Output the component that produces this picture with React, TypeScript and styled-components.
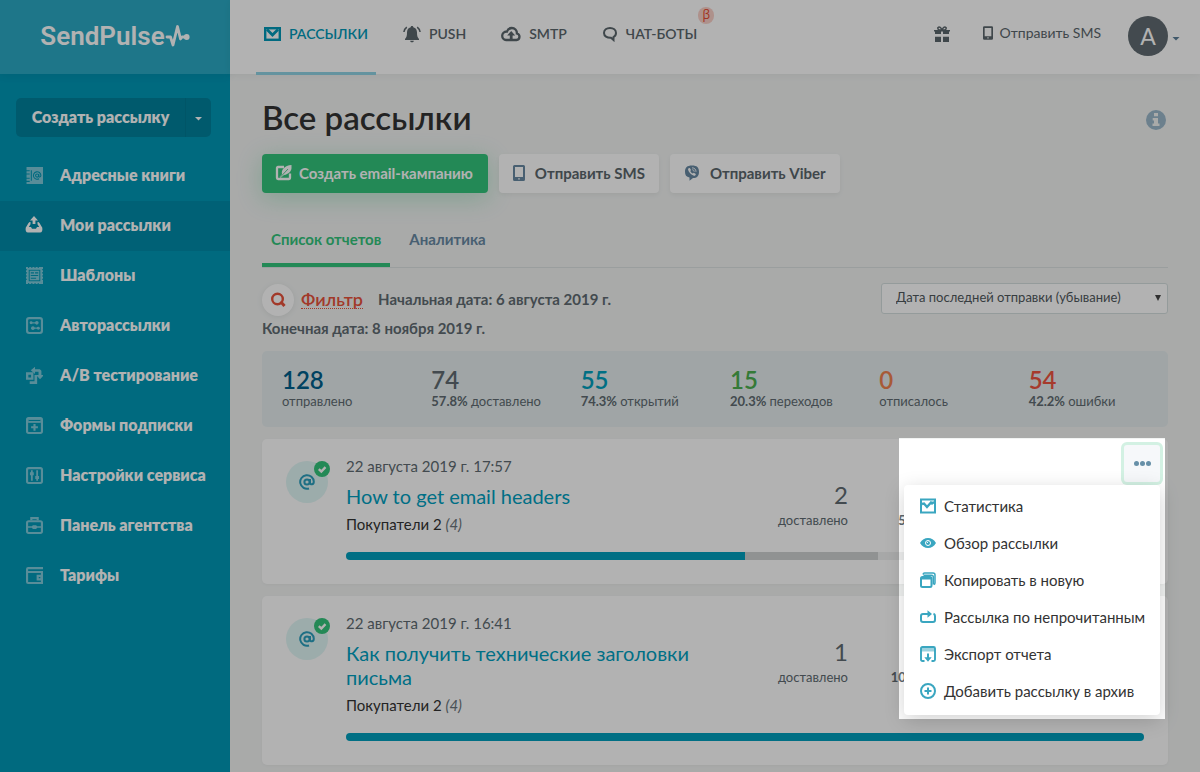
import React from "react";
import styled, { createGlobalStyle, css } from "styled-components";

const Global = createGlobalStyle`
  * { box-sizing: border-box; }
  body {
    margin: 0;
    background: #f2f4f3;
    color: #606b71;
    font-family: Lato, "Open Sans", "Noto Sans", sans-serif;
    font-size: 15px;
    line-height: 20px;
  }
  button, select { font: inherit; }
  button { border: 0; cursor: pointer; }
  a { text-decoration: none; color: inherit; }
  svg { display: block; flex: none; }
`;

/* ---------- icons ---------- */

type IconProps = { w?: number; h?: number; vb?: string; children?: React.ReactNode };
const Icon = ({ w = 17, h = 17, vb = "1 1 16 16", children }: IconProps) => (
  <svg width={w} height={h} viewBox={vb} fill="currentColor" aria-hidden="true">
    {children}
  </svg>
);
const line = { fill: "none", stroke: "currentColor", strokeWidth: 2 } as const;

const PulseIcon = () => (
  <svg width="25" height="24" viewBox="0 0 25 24" fill="none" stroke="currentColor" strokeWidth="2.8" strokeLinejoin="round" strokeLinecap="round" aria-hidden="true">
    <path d="M2 13H5.500l2.500 8L12.500 2.500l3 12.500 1.500-2H21" />
    <circle cx="21.700" cy="13" r="2.900" fill="currentColor" stroke="none" />
  </svg>
);
const BookIcon = () => (
  <Icon>
    <path fillRule="evenodd" d="M1.500 1H17v16H1.500v-2h3v-1h-3v-2h3v-1h-3V8h3V7h-3V5h3V4h-3zM5.500 4v10h1V4z" />
    <g fill="none" stroke="#0098b7" strokeWidth="1">
      <circle cx="11.500" cy="9" r="1.500" />
      <path d="M13 7.500v2.200c0 1.300 2 1 2-.9a3.500 3.500 0 1 0-1.700 3.200" />
    </g>
  </Icon>
);
const OutboxIcon = () => (
  <Icon w={18} h={18} vb="0 0 18 18">
    <path d="M9 0l4 4.500h-2.600V8H7.600V4.500H5z" />
    <path fillRule="evenodd" d="M5.500 6v2.200L3.800 11H6l1 1.800h4L12 11h2.200l-1.700-2.800V6c1 0 1.600.4 2 1.100l2.800 4.700c.4 3.200-.3 4.700-2.300 4.700H3c-2 0-2.700-1.500-2.300-4.700l2.800-4.700c.4-.7 1-1.100 2-1.100z" />
  </Icon>
);
const TemplateIcon = () => (
  <Icon>
    <path d="M1 2h16M1 16h16M2 1v16M16 1v16" {...line} strokeDasharray="2 1" />
    <path fillRule="evenodd" d="M2 2h14v14H2zM3.500 3.500v11h11v-11z" />
    <path d="M4.500 4.500h9v9h-9z" />
    <path d="M5.500 6.500h3M5.500 9h7M5.500 11.500h5M9.500 6.500h3" stroke="#0098b7" strokeWidth="1" />
  </Icon>
);
const AutoIcon = () => (
  <Icon>
    <rect x="2" y="2" width="14" height="14" rx="2" {...line} />
    <path d="M5 6.500h7M6 11.500h7" stroke="currentColor" strokeWidth="1.200" />
    <circle cx="5.800" cy="6.500" r="1.400" /><circle cx="11.200" cy="6.500" r="1.700" />
    <circle cx="7.500" cy="11.500" r="1.700" /><circle cx="12.600" cy="11.500" r="1.400" />
  </Icon>
);
const AbIcon = () => (
  <Icon>
    <path fillRule="evenodd" d="M1 6h7v7H1zM3.200 8.200v2.600h2.600V8.200z" />
    <path d="M9 8.500h2.500V17H4.500v-2.500H9z" />
    <path d="M5.500 4L9.500.8V3h4.500l1.500 1.500v4H18L14.200 12.500 10.500 8.500h2.300V5.500H9.500v2z" />
  </Icon>
);
const FormIcon = () => (
  <Icon>
    <rect x="2" y="2" width="14" height="14" rx="1.500" {...line} />
    <path d="M3 3h12v3.500H3z" /><path d="M3.500 4.300h11" stroke="#0098b7" strokeWidth="1" />
    <path d="M9 7.500v6.500M5.800 10.700h6.400" {...line} />
  </Icon>
);
const SlidersIcon = () => (
  <Icon>
    <rect x="2" y="2" width="14" height="14" rx="1.500" {...line} />
    <path d="M6.500 4v10M11.500 4v10" stroke="currentColor" strokeWidth="1.700" />
    <path d="M4.700 6h3.600v2.800H4.700zM9.700 9.500h3.600v2.800H9.700z" />
  </Icon>
);
const CaseIcon = () => (
  <Icon>
    <rect x="2" y="5" width="14" height="11" rx="1.500" {...line} />
    <path d="M6 4V2h6v2" {...line} />
    <path d="M2 9.800h4.500l1-1h3l1 1H16v1.400h-4.500l-1 1.200h-3l-1-1.200H2z" />
  </Icon>
);
const WalletIcon = () => (
  <Icon>
    <path d="M17 2H3q-1 0-1 1v12q0 1 1 1h13v-3M2.500 5.700H16V9" {...line} />
    <path fillRule="evenodd" d="M11 8.300h6v5.400h-6zM13 10.300v1.400h1.500v-1.400z" />
  </Icon>
);
const MailIcon = () => (
  <Icon w={17} h={16} vb="0 0 17 16">
    <rect x="1.200" y="2.200" width="14.600" height="11.600" {...line} strokeWidth="2.400" />
    <path d="M3 3.500l5.500 5.500 5.500-5.500" fill="none" stroke="currentColor" strokeWidth="2.800" />
  </Icon>
);
const BellIcon = () => (
  <Icon w={18} h={18} vb="0 0 18 18">
    <path d="M9 1c.8 0 1.300.5 1.300 1.200C12.800 2.800 14 4.700 14 7.500c0 3.500.5 4.800 2 6.500v1H2v-1c1.500-1.700 2-3 2-6.500 0-2.800 1.200-4.700 3.700-5.300C7.700 1.500 8.200 1 9 1zM7.200 15.700h3.600c0 2.100-3.600 2.100-3.600 0z" />
    <path d="M3.800 2.200Q1.300 4 .9 7M14.200 2.200Q16.700 4 17.100 7" fill="none" stroke="currentColor" strokeWidth="1.500" />
  </Icon>
);
const CloudIcon = () => (
  <Icon w={20} h={16} vb="0 0 20 16">
    <path d="M5 14h10.500a3.300 3.300 0 0 0 .4-6.500C16 4.300 13.700 2 10.800 2 8.300 2 6.700 3.300 6 5.500 3 5.300 1.200 7.500 1.200 9.800 1.200 12.200 3 14 5 14z" {...line} strokeWidth="2.300" />
    <path d="M10.200 5l4 4.500h-2.600V14H8.800V9.500H6.200z" />
  </Icon>
);
const ChatIcon = () => (
  <Icon w={16} h={16} vb="0 0 16 16">
    <path d="M8 2c3.400 0 6 2 6 4.900 0 1.800-.9 3.200-2.500 4.100V14L9 11.800c-4 .2-7-1.800-7-4.900C2 4 4.600 2 8 2z" {...line} />
  </Icon>
);
const GiftIcon = () => (
  <Icon w={16} h={16} vb="0 0 16 16">
    <path d="M1 4h6v4H1zM9 4h6v4H9zM1 10.700h6V16H1zM9 10.700h6V16H9z" />
    <path d="M0 4.800h16M7.500 4C4.500 4.500 3.500 3 4 1.500c1.500-1 3 0 4 2.500 1-2.500 2.500-3.500 4-2.500.5 1.500-.5 3-3.500 2.500" fill="none" stroke="currentColor" strokeWidth="1.500" />
  </Icon>
);
const PhoneIcon = ({ w = 12, h = 16 }: { w?: number; h?: number }) => (
  <Icon w={w} h={h} vb="0 0 12 16">
    <path fillRule="evenodd" d="M1.500 0h9A1.500 1.500 0 0 1 12 1.500v13a1.500 1.500 0 0 1-1.500 1.500h-9A1.500 1.500 0 0 1 0 14.500v-13A1.500 1.500 0 0 1 1.500 0zM2 2v10h8V2zm3.200 11.200v1.300h1.600v-1.300z" />
  </Icon>
);
const ComposeIcon = () => (
  <Icon w={17} h={16} vb="0 0 17 16">
    <path d="M9 2H3Q2 2 2 3v10q0 1 1 1h11q1 0 1-1V8.500" {...line} strokeWidth="2.300" />
    <path d="M16.500 0v3c0 3-3 6.500-7.500 7L5.500 13l-1-1L7 9.200C6 5 9.500.5 16.500 0z" />
    <path d="M5 12.500L13 4" stroke="#33c47b" strokeWidth=".8" />
  </Icon>
);
const ViberIcon = () => (
  <Icon w={16} h={16} vb="0 0 16 16">
    <path d="M8 .5c5 0 7 2 7 6.300s-2 6.200-6 6.300L5.500 15.800v-3.200C2.300 11.900 1 10.200 1 6.800 1 2.500 3 .5 8 .5z" />
    <path d="M4.500 3.300l1.300-.2 1.200 2-.7 1c.5 1.300 1.200 2 2.500 2.500l1-.8 2 1.200c0 1.300-.8 2-1.800 1.800C7 9.600 4.700 7.500 4 4.500z" fill="#fff" />
    <path d="M8 2.800c2.700.2 3.900 1.500 4 4M8.300 4.700c1.200.1 1.800.8 1.900 2" fill="none" stroke="#fff" strokeWidth=".9" />
  </Icon>
);
const InfoIcon = () => (
  <Icon w={20} h={20} vb="0 0 20 20">
    <circle cx="10" cy="10" r="10" />
    <path d="M8 3h4v3.200H8zM6.700 8H12v5.500h1.500V16h-7v-2.500H8v-3H6.700z" fill="#f2f4f3" />
  </Icon>
);
const SearchIcon = () => (
  <Icon w={16} h={16} vb="0 0 16 16">
    <circle cx="7.500" cy="7" r="5.300" fill="none" stroke="currentColor" strokeWidth="2.400" />
    <path d="M10.500 9.500l4 4.500" stroke="currentColor" strokeWidth="3" />
  </Icon>
);
const AtIcon = () => (
  <Icon w={16} h={16} vb="0 0 16 16">
    <g {...line}>
      <circle cx="8" cy="8" r="2.600" />
      <path d="M11 5v3.600c0 2.600 3.800 2.300 3.800-.8A6.800 6.800 0 1 0 10 14.500" />
    </g>
  </Icon>
);
const CheckIcon = () => (
  <Icon w={16} h={16} vb="0 0 16 16">
    <path d="M4.800 8.200l2.500 2.300L11.500 6.200" fill="none" stroke="currentColor" strokeWidth="2.400" />
  </Icon>
);
const StatIcon = () => (
  <Icon w={16} h={16} vb="0 0 16 16">
    <rect x="1" y="1.500" width="14" height="13" {...line} />
    <path d="M2 6l2-.5 3 3.500 4-4.500 1 1 2-1.500" fill="none" stroke="currentColor" strokeWidth="2.400" />
  </Icon>
);
const EyeIcon = () => (
  <Icon w={16} h={16} vb="0 0 16 16">
    <path d="M0 8c2-3.300 4.700-5 8-5s6 1.700 8 5c-2 3.300-4.700 5-8 5s-6-1.700-8-5z" />
    <circle cx="8" cy="8" r="2.500" fill="none" stroke="#fff" strokeWidth="1" />
    <path d="M7 8l1-1.200" stroke="#fff" />
  </Icon>
);
const CopyIcon = () => (
  <Icon w={16} h={16} vb="0 0 16 16">
    <rect x="1" y="5" width="10.500" height="10" rx="1.500" {...line} />
    <path d="M1 5h10.500v2.500H1z" />
    <path d="M3 2.500Q3.300 1 4.500 1H13q2 0 2 2v8q0 1.200-1.200 1.500M3.500 3.300H11.500q1.800 0 1.800 1.800V12.500" fill="none" stroke="currentColor" strokeWidth="1.500" />
  </Icon>
);
const ResendIcon = () => (
  <Icon w={16} h={16} vb="0 0 16 16">
    <path d="M9 5H3Q1 5 1 7v4Q1 13 3 13h10q2 0 2-2V7Q15 5.300 13.500 4.800" {...line} />
    <path d="M7.500 1.200L12 5 7.500 8.800z" />
  </Icon>
);
const ExportIcon = () => (
  <Icon w={16} h={16} vb="0 0 16 16">
    <path d="M4.500 15H2.500Q1 15 1 13.500v-11Q1 1 2.500 1h11Q15 1 15 2.500v11q0 1.500-1.500 1.500h-2" {...line} strokeWidth="1.900" />
    <path d="M1 2h14v3.500H1z" opacity=".5" />
    <path d="M7 7.500h2v3.700h2.700L8 15.800 4.300 11.200H7z" />
  </Icon>
);
const AddIcon = () => (
  <Icon w={16} h={16} vb="0 0 16 16">
    <circle cx="8" cy="8" r="7" {...line} />
    <path d="M8 4.500v7M4.500 8h7" {...line} />
  </Icon>
);

/* ---------- layout ---------- */

const Page = styled.div`
  display: flex;
  min-height: 100vh;
`;
const Sidebar = styled.aside`
  flex: none;
  width: 230px;
  background: #0098b7;
  color: #fff;
`;
const Logo = styled.a`
  display: flex;
  align-items: center;
  justify-content: center;
  height: 74px;
  padding-bottom: 3px;
  background: #2baac5;
  box-shadow: 0 2px 8px rgba(0, 60, 80, 0.1);
  font: 600 26px/30px Roboto, sans-serif;
`;
const CreateGroup = styled.div`
  display: flex;
  margin: 24px 19px 14px 16px;
  border-radius: 5px;
  overflow: hidden;
  background: #00829d;
`;
const CreateButton = styled.button`
  flex: 1;
  height: 39px;
  padding: 0 0 2px;
  background: none;
  color: #fff;
  font-size: 16px;
  font-weight: 800;
`;
const CreateToggle = styled.button`
  display: grid;
  place-items: center;
  width: 26px;
  padding: 2px 0 0;
  background: none;
  border-left: 1px solid #007a94;
  color: #fff;
`;
const Caret = styled.span`
  width: 8px;
  height: 4px;
  background: currentColor;
  clip-path: polygon(0 0, 100% 0, 50% 100%);
`;
const SideLink = styled.a<{ $active?: boolean }>`
  display: flex;
  align-items: center;
  height: 50px;
  padding: 0 0 2px 25px;
  font-size: 16px;
  font-weight: 800;
  background: ${(p) => (p.$active ? "#008ba9" : "transparent")};
`;
const SideIcon = styled.span<{ $active?: boolean }>`
  display: grid;
  place-items: center;
  width: 18px;
  margin-right: 17px;
  opacity: ${(p) => (p.$active ? 1 : 0.5)};
`;

const Column = styled.div`
  flex: 1;
  min-width: 0;
`;
const Header = styled.header`
  display: flex;
  justify-content: space-between;
  height: 74px;
  padding: 0 20px 0 26px;
  background: #fff;
  box-shadow: 0 1px 8px rgba(0, 0, 0, 0.06);
`;
const TopNav = styled.nav`
  display: flex;
  gap: 19px;
`;
const TopLink = styled.a<{ $active?: boolean }>`
  position: relative;
  display: flex;
  align-items: center;
  gap: 8px;
  height: 75px;
  padding: 0 8px 7px;
  font-size: 14px;
  font-weight: 600;
  color: #5b666c;
  ${(p) => p.$active && css`
    color: #0099b8;
    box-shadow: inset 0 -3px #90d3e4;
  `}
`;
const Beta = styled.sup`
  position: absolute;
  top: 7px;
  right: -9px;
  width: 16px;
  height: 17px;
  border-radius: 8px;
  background: #fad0c8;
  color: #e8452c;
  font: 12px/16px "Open Sans", sans-serif;
  text-align: center;
`;
const HeaderTools = styled.div`
  display: flex;
  align-items: center;
  color: #5b666c;
`;
const SmsLink = styled.a`
  display: flex;
  align-items: center;
  gap: 6px;
  margin: 0 27px 8px 33px;
  font-size: 14px;
`;
const GiftLink = styled.a`
  margin-bottom: 6px;
`;
const Profile = styled.button`
  display: flex;
  align-items: center;
  gap: 4px;
  padding: 0 0 2px;
  background: none;
  color: #5c7f99;
  ${Caret} { margin-top: 5px; }
`;
const Avatar = styled.span`
  width: 40px;
  height: 40px;
  border-radius: 50%;
  background: #606b71;
  color: #fff;
  font-size: 23px;
  line-height: 40px;
`;

const Main = styled.main`
  padding: 24px 32px 7px;
`;
const TitleRow = styled.div`
  display: flex;
  align-items: center;
  justify-content: space-between;
  height: 40px;
  padding: 4px 2px 0 0;
  color: #9bb8cb;
`;
const Title = styled.h1`
  margin: 0 0 6px;
  font-size: 33px;
  line-height: 40px;
  font-weight: 600;
  color: #333;
`;
const Actions = styled.div`
  display: flex;
  gap: 11px;
  margin-top: 16px;
`;
const Action = styled.button<{ $primary?: boolean }>`
  display: flex;
  align-items: center;
  gap: 10px;
  height: 39px;
  padding: 0 14px 2px;
  border-radius: 4px;
  font-weight: 700;
  background: #fff;
  color: #5b666c;
  box-shadow: 0 2px 5px rgba(0, 0, 0, 0.06);
  svg { color: #6789a3; }
  ${(p) => p.$primary && css`
    gap: 7px;
    padding: 0 15px 2px 13px;
    background: #33c47b;
    color: #fff;
    box-shadow: 0 5px 25px rgba(51, 196, 123, 0.3);
    svg { color: #fff; }
  `}
`;
const Tabs = styled.div`
  display: flex;
  height: 47px;
  margin-top: 28px;
  border-bottom: 1px solid #dde3e3;
`;
const Tab = styled.button<{ $active?: boolean }>`
  height: 46px;
  padding: 0 9px 10px;
  margin: 0 10px 0 0;
  background: none;
  font-weight: 700;
  color: #6789a3;
  ${(p) => p.$active && css`
    color: #33c47b;
    border-bottom: 4px solid #33c47b;
    padding-bottom: 6px;
  `}
`;
const FilterRow = styled.div`
  display: flex;
  justify-content: space-between;
  align-items: flex-start;
  margin-top: 15px;
`;
const FilterInfo = styled.div`
  width: 400px;
  font-weight: 700;
`;
const FilterLine = styled.div`
  display: flex;
  align-items: center;
  height: 33px;
`;
const FilterEnd = styled.div`
  line-height: 24px;
`;
const FilterButton = styled.button`
  display: flex;
  align-items: center;
  gap: 7px;
  margin-right: 15px;
  padding: 0;
  background: none;
  color: #e8523c;
  font-size: 18px;
  font-weight: 600;
`;
const Round = styled.span`
  display: grid;
  place-items: center;
  width: 32px;
  height: 32px;
  border-radius: 50%;
  background: #fff;
  box-shadow: 0 1px 6px rgba(0, 0, 0, 0.08);
`;
const Dotted = styled.span`
  line-height: 18px;
  border-bottom: 1px dotted;
`;
const StartDate = styled.span`
  padding-bottom: 2px;
`;
const SortBox = styled.div`
  position: relative;
  width: 287px;
  color: #444;
`;
const Sort = styled.select`
  width: 100%;
  height: 31px;
  padding: 0 28px 3px 14px;
  appearance: none;
  border: 1px solid #d5dfde;
  border-radius: 3px;
  background: #fff;
  color: #50585c;
  font-size: 13px;
`;
const SortArrow = styled.span`
  position: absolute;
  right: 7px;
  top: 12px;
  width: 6px;
  height: 6px;
  background: currentColor;
  clip-path: polygon(0 0, 100% 0, 50% 100%);
  pointer-events: none;
`;

const Summary = styled.section`
  display: flex;
  margin: 11px 0 12px;
  height: 76px;
  padding: 0 5px;
  border-radius: 5px;
  background: #e5edee;
`;
const SummaryCell = styled.div`
  flex: 1;
  padding: 17px 0 0 15px;
  font-size: 13px;
  line-height: 18px;
  white-space: nowrap;
`;
const SummaryValue = styled.div<{ $color: string }>`
  font-size: 24px;
  line-height: 24px;
  font-weight: 600;
  color: ${(p) => p.$color};
`;

const Card = styled.article`
  position: relative;
  display: flex;
  gap: 18px;
  margin-bottom: 12px;
  padding: 17px 24px 24px;
  border-radius: 5px;
  background: #fff;
  box-shadow: 0 1px 3px rgba(0, 0, 0, 0.04);
  &:last-child { margin-bottom: 0; }
`;
const Channel = styled.div`
  position: relative;
  display: grid;
  place-items: center;
  flex: none;
  width: 42px;
  height: 42px;
  margin-top: 5px;
  border-radius: 50%;
  background: #e0f6f5;
  color: #2b9fbd;
`;
const Done = styled.span`
  position: absolute;
  top: 0;
  right: -2px;
  border-radius: 50%;
  background: #33c47b;
  color: #fff;
`;
const CardBody = styled.div`
  flex: 1;
  min-width: 0;
`;
const CardTop = styled.div`
  display: flex;
`;
const CardText = styled.div`
  width: 368px;
`;
const CardTitle = styled.a`
  display: block;
  margin: 8px 0 6px;
  font-size: 20px;
  line-height: 24px;
  color: #009fc1;
`;
const Lists = styled.div`
  color: #333;
  em { color: #6b757b; }
`;
const Metrics = styled.div`
  display: grid;
  grid-template-columns: 134px 76px;
  align-items: end;
  align-content: start;
  padding-top: 26px;
`;
const Metric = styled.div`
  text-align: right;
  font-size: 13px;
  line-height: 18px;
`;
const MetricValue = styled.div`
  margin-bottom: 3px;
  font-size: 24px;
  line-height: 26px;
`;
const Bar = styled.div`
  display: flex;
  height: 8px;
  margin-top: 18px;
  border-radius: 4px;
  overflow: hidden;
  background: #f0f1f1;
`;
const BarPart = styled.div<{ $color: string }>`
  background: ${(p) => p.$color};
`;

const More = styled.button`
  position: absolute;
  top: 6px;
  right: 8px;
  display: flex;
  align-items: center;
  justify-content: center;
  gap: 1px;
  width: 36px;
  height: 37px;
  padding: 0;
  border-radius: 3px;
  background: #f6f8fa;
  box-shadow: 0 0 0 3px #d3f1e3;
  &::before, &::after, span {
    content: "";
    width: 5px;
    height: 5px;
    border-radius: 50%;
    background: #6790a8;
  }
`;
const Menu = styled.ul`
  position: absolute;
  z-index: 5;
  top: 46px;
  right: 8px;
  width: 256px;
  margin: 0;
  padding: 4px 0;
  list-style: none;
  border-radius: 4px;
  background: #fff;
  box-shadow: 0 5px 20px rgba(0, 0, 0, 0.18);
`;
const MenuItem = styled.button`
  display: flex;
  align-items: center;
  gap: 8px;
  width: 100%;
  height: 37px;
  padding: 0 0 3px 16px;
  background: none;
  color: #333;
  white-space: nowrap;
  svg { color: #3aa6c0; }
`;
const Spotlight = styled.div`
  position: absolute;
  z-index: 10;
  top: -1px;
  right: 3px;
  width: 266px;
  height: 281px;
  box-shadow: 0 0 0 4000px rgba(0, 0, 0, 0.3);
  pointer-events: none;
`;

/* ---------- data ---------- */

const sideLinks = [
  { label: "Адресные книги", icon: <BookIcon /> },
  { label: "Мои рассылки", icon: <OutboxIcon />, active: true },
  { label: "Шаблоны", icon: <TemplateIcon /> },
  { label: "Авторассылки", icon: <AutoIcon /> },
  { label: "A/B тестирование", icon: <AbIcon /> },
  { label: "Формы подписки", icon: <FormIcon /> },
  { label: "Настройки сервиса", icon: <SlidersIcon /> },
  { label: "Панель агентства", icon: <CaseIcon /> },
  { label: "Тарифы", icon: <WalletIcon /> },
];
const topLinks = [
  { label: "РАССЫЛКИ", icon: <MailIcon />, active: true },
  { label: "PUSH", icon: <BellIcon /> },
  { label: "SMTP", icon: <CloudIcon /> },
  { label: "ЧАТ-БОТЫ", icon: <ChatIcon />, beta: true },
];
const summary = [
  { value: "128", label: "отправлено", color: "#005f8c" },
  { value: "74", share: "57.8%", label: "доставлено", color: "#606b71" },
  { value: "55", share: "74.3%", label: "открытий", color: "#009fbd" },
  { value: "15", share: "20.3%", label: "переходов", color: "#4caf50" },
  { value: "0", label: "отписалось", color: "#f0814f" },
  { value: "54", share: "42.2%", label: "ошибки", color: "#ee5440" },
];
const menuItems = [
  { label: "Статистика", icon: <StatIcon /> },
  { label: "Обзор рассылки", icon: <EyeIcon /> },
  { label: "Копировать в новую", icon: <CopyIcon /> },
  { label: "Рассылка по непрочитанным", icon: <ResendIcon /> },
  { label: "Экспорт отчета", icon: <ExportIcon /> },
  { label: "Добавить рассылку в архив", icon: <AddIcon /> },
];

type CampaignProps = {
  date: string; title: string; delivered: number;
  share: string; opens: number; reach: number; children?: React.ReactNode;
};
const Campaign = ({ date, title, delivered, share, opens, reach, children }: CampaignProps) => (
  <Card>
    <Channel>
      <AtIcon />
      <Done><CheckIcon /></Done>
    </Channel>
    <CardBody>
      <CardTop>
        <CardText>
          <time>{date}</time>
          <CardTitle href="#">{title}</CardTitle>
          <Lists>Покупатели 2 <em>(4)</em></Lists>
        </CardText>
        <Metrics>
          <Metric><MetricValue>{delivered}</MetricValue>доставлено</Metric>
          <Metric><b>{share}</b></Metric>
        </Metrics>
      </CardTop>
      <Bar>
        <BarPart $color="#009fbd" style={{ width: `${opens}%` }} />
        <BarPart $color="#cfd1d2" style={{ width: `${reach}%` }} />
      </Bar>
    </CardBody>
    {children}
  </Card>
);

export default function App() {
  return (
    <Page>
      <Global />
      <Sidebar>
        <Logo href="#">SendPulse<PulseIcon /></Logo>
        <CreateGroup>
          <CreateButton>Создать рассылку</CreateButton>
          <CreateToggle aria-label="Другие варианты"><Caret /></CreateToggle>
        </CreateGroup>
        <nav>
          {sideLinks.map((l) => (
            <SideLink key={l.label} href="#" $active={l.active}>
              <SideIcon $active={l.active}>{l.icon}</SideIcon>{l.label}
            </SideLink>
          ))}
        </nav>
      </Sidebar>
      <Column>
        <Header>
          <TopNav>
            {topLinks.map((l) => (
              <TopLink key={l.label} href="#" $active={l.active}>
                {l.icon}{l.label}{l.beta && <Beta>β</Beta>}
              </TopLink>
            ))}
          </TopNav>
          <HeaderTools>
            <GiftLink href="#" aria-label="Подарки"><GiftIcon /></GiftLink>
            <SmsLink href="#"><PhoneIcon w={10} h={14} />Отправить SMS</SmsLink>
            <Profile><Avatar>A</Avatar><Caret /></Profile>
          </HeaderTools>
        </Header>
        <Main>
          <TitleRow><Title>Все рассылки</Title><InfoIcon /></TitleRow>
          <Actions>
            <Action $primary><ComposeIcon />Создать email-кампанию</Action>
            <Action><PhoneIcon />Отправить SMS</Action>
            <Action><ViberIcon />Отправить Viber</Action>
          </Actions>
          <Tabs>
            <Tab $active>Список отчетов</Tab>
            <Tab>Аналитика</Tab>
          </Tabs>
          <FilterRow>
            <FilterInfo>
              <FilterLine>
                <FilterButton><Round><SearchIcon /></Round><Dotted>Фильтр</Dotted></FilterButton>
                <StartDate>Начальная дата: 6 августа 2019 г.</StartDate>
              </FilterLine>
              <FilterEnd>Конечная дата: 8 ноября 2019 г.</FilterEnd>
            </FilterInfo>
            <SortBox>
              <Sort aria-label="Сортировка"><option>Дата последней отправки (убывание)</option></Sort>
              <SortArrow />
            </SortBox>
          </FilterRow>
          <Summary>
            {summary.map((s) => (
              <SummaryCell key={s.label}>
                <SummaryValue $color={s.color}>{s.value}</SummaryValue>
                {s.share && <b>{s.share} </b>}{s.label}
              </SummaryCell>
            ))}
          </Summary>
          <Campaign date="22 августа 2019 г. 17:57" title="How to get email headers" delivered={2} share="50%" opens={50} reach={16.67}>
            <More aria-label="Действия"><span /></More>
            <Menu>
              {menuItems.map((m) => (
                <li key={m.label}><MenuItem>{m.icon}{m.label}</MenuItem></li>
              ))}
            </Menu>
            <Spotlight />
          </Campaign>
          <Campaign date="22 августа 2019 г. 16:41" title="Как получить технические заголовки письма" delivered={1} share="100%" opens={100} reach={0} />
        </Main>
      </Column>
    </Page>
  );
}
